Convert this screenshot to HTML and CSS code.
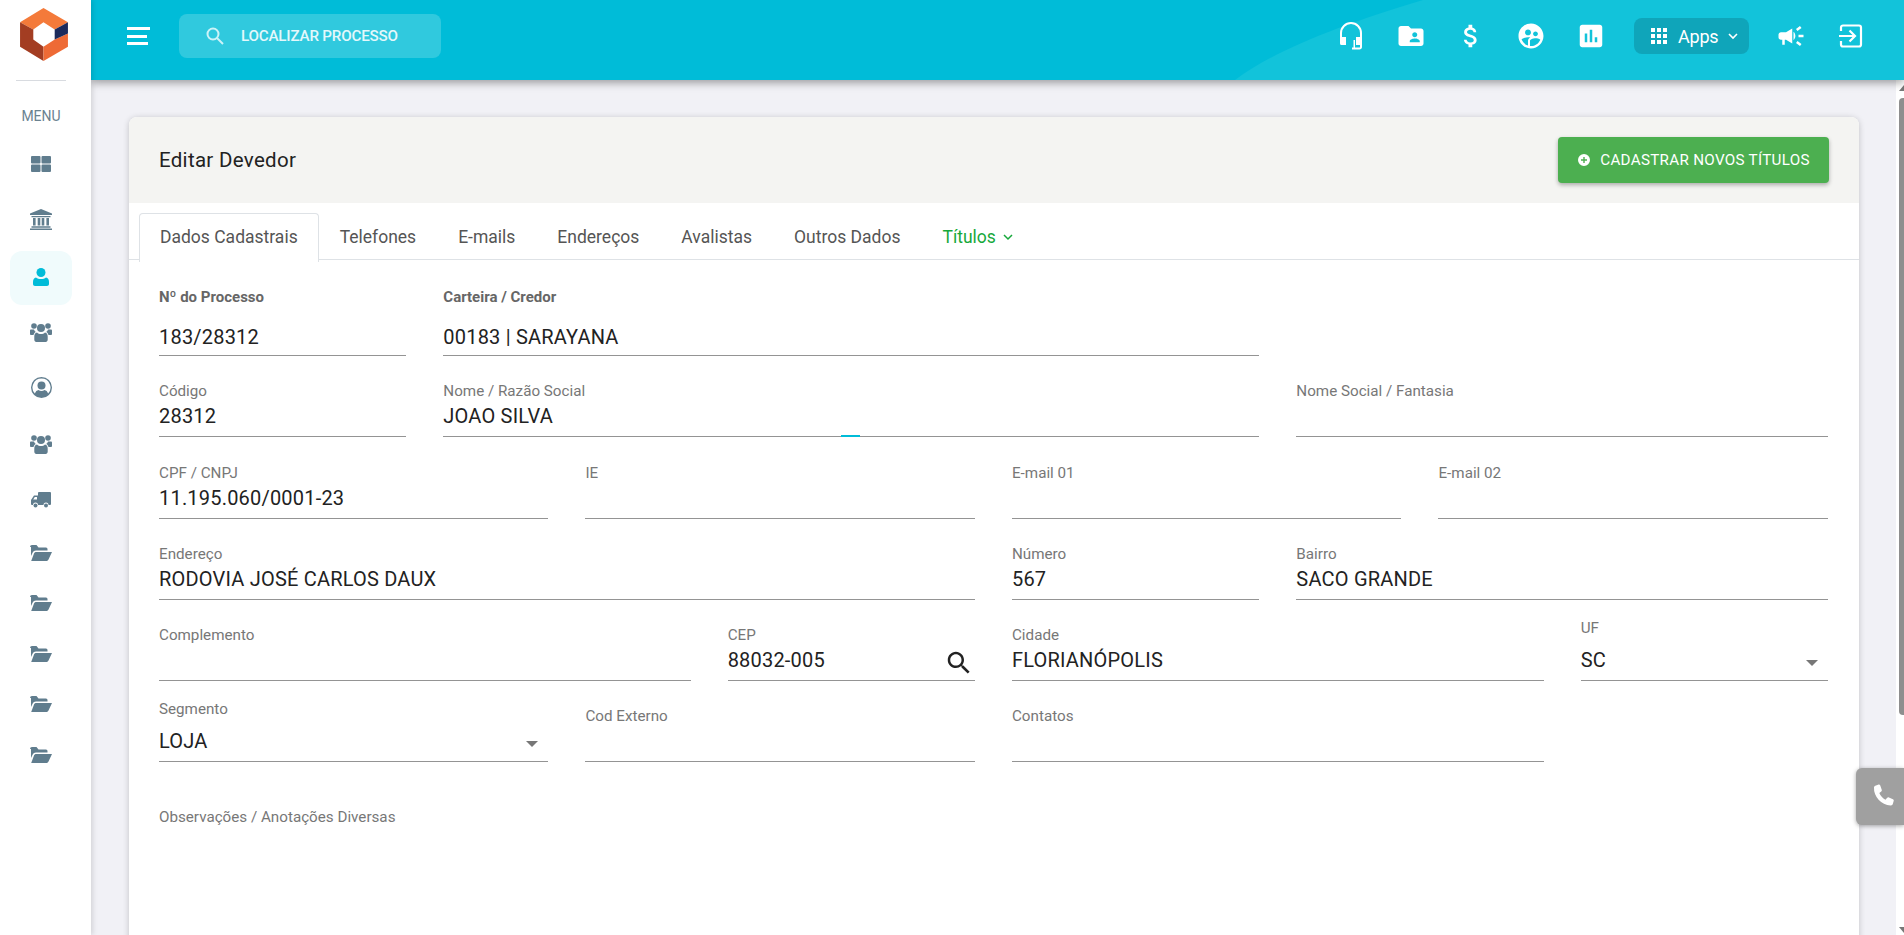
FILE: index.html
```html
<!DOCTYPE html>
<html lang="pt-BR">
<head>
    <meta charset="UTF-8">
    <meta name="viewport" content="width=device-width, initial-scale=1.0">
    <title>Editar Devedor</title>
    <link rel="stylesheet" href="styles.css">
</head>
<body>
    <aside class="sidebar">
        <div class="logo">
            <svg width="48" height="53" viewBox="20 8 47 52">
                <path fill="#f47a3a" d="M20 22 43 8l24 14-13 7-11-7-10 7z"/>
                <path fill="#a33d22" d="M20 22l13 7v10l10 7v14L20 46z"/>
                <path fill="#ee6a35" d="M43 60l24-14V33l-13 6-11 7z"/>
                <path fill="#1b2a5c" d="M54 29l13-7v11l-13 6z"/>
            </svg>
        </div>
        <div class="sidebar-divider"></div>
        <div class="menu-title">MENU</div>
        <nav class="menu">
            <a class="menu-item" href="#"><svg width="20" height="16" viewBox="0 0 20 16"><path d="M1 0h7.500a1 1 0 0 1 1 1v5.500a1 1 0 0 1-1 1H1a1 1 0 0 1-1-1V1a1 1 0 0 1 1-1zm10.500 0H19a1 1 0 0 1 1 1v5.500a1 1 0 0 1-1 1h-7.500a1 1 0 0 1-1-1V1a1 1 0 0 1 1-1zM1 8.500h7.500a1 1 0 0 1 1 1V15a1 1 0 0 1-1 1H1a1 1 0 0 1-1-1V9.500a1 1 0 0 1 1-1zm10.500 0H19a1 1 0 0 1 1 1V15a1 1 0 0 1-1 1h-7.500a1 1 0 0 1-1-1V9.500a1 1 0 0 1 1-1z"/></svg></a>
            <a class="menu-item" href="#"><svg width="22" height="21" viewBox="0 0 22 21"><path d="M11 0l11 4.500V6H0V4.500zM1.500 7h19v1.200h-19zM3 9h2.600v7.500H3zm4.700 0h2.600v7.500H7.700zm4 0h2.600v7.500h-2.600zm4.700 0H19v7.500h-2.600zM1.500 17.300h19v1.500h-19zM0 19.500h22V21H0z"/></svg></a>
            <a class="menu-item active" href="#"><svg width="16" height="18" viewBox="0 0 16 18"><circle cx="8" cy="4.500" r="4.500"/><path d="M3 9.500c1.300 1 3 1.500 5 1.500s3.700-.5 5-1.500c2 .3 3 2 3 4.500v2c0 1.200-.8 2-2 2H2c-1.200 0-2-.8-2-2v-2c0-2.500 1-4.200 3-4.500z"/></svg></a>
            <a class="menu-item" href="#"><svg width="22" height="20" viewBox="0 0 22 20"><use href="#icon-users"/></svg></a>
            <a class="menu-item" href="#"><svg width="21" height="21" viewBox="0 0 21 21"><path fill-rule="evenodd" d="M10.500 0a10.500 10.500 0 1 1 0 21 10.500 10.500 0 0 1 0-21zm0 1.500a9 9 0 0 0-6.600 15.100c.6-2 2-3.200 3.600-3.500 1.800 1.200 4.200 1.200 6 0 1.600.3 3 1.500 3.600 3.500A9 9 0 0 0 10.500 1.500z"/><circle cx="10.500" cy="8.500" r="4"/></svg></a>
            <a class="menu-item" href="#"><svg width="22" height="20" viewBox="0 0 22 20"><use href="#icon-users"/></svg></a>
            <a class="menu-item" href="#"><svg width="20" height="16" viewBox="0 0 20 16"><path fill-rule="evenodd" d="M8 0h11a1 1 0 0 1 1 1v11a1 1 0 0 1-1 1h-1.500a2.500 2.500 0 0 0-5 0H7a2.500 2.500 0 0 0-5 0H1a1 1 0 0 1-1-1V8l3-4.500h4V1a1 1 0 0 1 1-1zM2.200 7.500H6V5H3.800z"/><circle cx="4.500" cy="13.500" r="2"/><circle cx="15" cy="13.500" r="2"/></svg></a>
            <a class="menu-item folder" href="#"><svg width="22" height="16" viewBox="0 0 22 16"><use href="#icon-folder"/></svg></a>
            <a class="menu-item folder" href="#"><svg width="22" height="16" viewBox="0 0 22 16"><use href="#icon-folder"/></svg></a>
            <a class="menu-item folder" href="#"><svg width="22" height="16" viewBox="0 0 22 16"><use href="#icon-folder"/></svg></a>
            <a class="menu-item folder" href="#"><svg width="22" height="16" viewBox="0 0 22 16"><use href="#icon-folder"/></svg></a>
            <a class="menu-item folder" href="#"><svg width="22" height="16" viewBox="0 0 22 16"><use href="#icon-folder"/></svg></a>
        </nav>
    </aside>

    <div class="main">
        <header class="topbar">
            <svg class="topbar-wave" width="669" height="80" viewBox="0 0 669 80"><path d="M0 80C40 50 105 25 188 0H669V80z"/></svg>
            <button class="menu-toggle" type="button"><span></span><span></span><span></span></button>
            <label class="search">
                <svg width="18" height="18" viewBox="0 0 18 18" fill="none" stroke="currentColor" stroke-width="2"><circle cx="7" cy="7" r="5.500"/><path d="M11 11l6 6"/></svg>
                <input type="text" placeholder="LOCALIZAR PROCESSO">
            </label>
            <div class="topbar-actions">
                <a class="top-icon" href="#"><svg width="26" height="28" viewBox="0 0 26 28"><path fill="none" stroke="#fff" stroke-width="2" d="M3 17V11a10 10 0 0 1 20 0v14a1.500 1.500 0 0 1-1.500 1.500H14"/><path fill="#fff" d="M3.500 15H8v8H3.500A1.500 1.500 0 0 1 2 21.500v-5A1.500 1.500 0 0 1 3.500 15zM18 15h4.500a1.500 1.500 0 0 1 1.500 1.500v5a1.500 1.500 0 0 1-1.500 1.500H18zM15.500 18H17v8h-1.500z"/></svg></a>
                <a class="top-icon" href="#"><svg width="30" height="30" viewBox="0 0 24 24"><path d="M20 6h-8l-2-2H4c-1.100 0-1.990.9-1.990 2L2 18c0 1.100.9 2 2 2h16c1.100 0 2-.9 2-2V8c0-1.100-.9-2-2-2zm-5 3c1.100 0 2 .9 2 2s-.9 2-2 2-2-.9-2-2 .9-2 2-2zm4 8h-8v-1c0-1.330 2.670-2 4-2s4 .67 4 2v1z"/></svg></a>
                <a class="top-icon" href="#"><svg width="30" height="30" viewBox="0 0 24 24"><path d="M11.800 10.900c-2.270-.59-3-1.200-3-2.150 0-1.090 1.010-1.850 2.700-1.850 1.780 0 2.440.85 2.500 2.100h2.210c-.07-1.720-1.120-3.300-3.210-3.810V3h-3v2.160c-1.940.42-3.500 1.680-3.500 3.610 0 2.310 1.910 3.460 4.700 4.130 2.500.6 3 1.480 3 2.410 0 .69-.49 1.790-2.700 1.790-2.060 0-2.870-.92-2.980-2.100h-2.200c.12 2.190 1.760 3.420 3.680 3.830V21h3v-2.150c1.950-.37 3.500-1.500 3.500-3.550 0-2.840-2.430-3.810-4.700-4.400z"/></svg></a>
                <a class="top-icon" href="#"><svg width="30" height="30" viewBox="0 0 24 24"><path d="M11.990 2c-5.520 0-10 4.480-10 10s4.480 10 10 10 10-4.480 10-10-4.480-10-10-10zm3.610 6.340c1.070 0 1.930.86 1.930 1.930 0 1.070-.86 1.930-1.930 1.930-1.070 0-1.930-.86-1.930-1.930-.01-1.070.86-1.930 1.930-1.930zm-6-1.580c1.300 0 2.360 1.060 2.360 2.360 0 1.300-1.060 2.360-2.360 2.360s-2.360-1.060-2.360-2.360c0-1.310 1.050-2.360 2.360-2.360zm0 9.130v3.750c-2.400-.75-4.300-2.600-5.140-4.960 1.050-1.120 3.670-1.690 5.140-1.690.53 0 1.200.08 1.900.22-1.640.87-1.900 2.020-1.900 2.680zM11.990 20c-.27 0-.53-.01-.79-.04v-4.070c0-1.420 2.940-2.130 4.400-2.130 1.070 0 2.920.39 3.840 1.150-1.170 2.970-4.060 5.090-7.450 5.090z"/></svg></a>
                <a class="top-icon" href="#"><svg width="30" height="30" viewBox="0 0 24 24"><path d="M19 3H5c-1.100 0-2 .9-2 2v14c0 1.100.9 2 2 2h14c1.100 0 2-.9 2-2V5c0-1.100-.9-2-2-2zM9 17H7v-7h2v7zm4 0h-2V7h2v10zm4 0h-2v-4h2v4z"/></svg></a>
                <button class="apps-btn" type="button">
                    <svg width="24" height="24" viewBox="0 0 24 24"><path d="M4 8h4V4H4v4zm6 12h4v-4h-4v4zm-6 0h4v-4H4v4zm0-6h4v-4H4v4zm6 0h4v-4h-4v4zm6-10v4h4V4h-4zm-6 4h4V4h-4v4zm6 6h4v-4h-4v4zm0 6h4v-4h-4v4z"/></svg>
                    <span>Apps</span>
                    <svg class="chevron" width="12" height="8" viewBox="0 0 12 8" fill="none" stroke="currentColor" stroke-width="1.600"><path d="M2 2l4 4 4-4"/></svg>
                </button>
                <a class="top-icon" href="#"><svg width="30" height="30" viewBox="0 0 24 24"><path d="M18 11v2h4v-2h-4zm-2 6.610c.96.71 2.210 1.650 3.200 2.390.4-.53.8-1.070 1.200-1.600-.99-.74-2.240-1.680-3.200-2.400-.4.54-.8 1.080-1.200 1.610zM20.400 5.600c-.4-.53-.8-1.070-1.200-1.600-.99.74-2.240 1.680-3.200 2.400.4.53.8 1.070 1.200 1.600.96-.72 2.210-1.650 3.200-2.400zM4 9c-1.100 0-2 .9-2 2v2c0 1.100.9 2 2 2h1v4h2v-4h1l5 3V6L8 9H4zm11.500 3c0-1.330-.58-2.530-1.500-3.350v6.690c.92-.81 1.500-2.010 1.500-3.340z"/></svg></a>
                <a class="top-icon" href="#"><svg width="26" height="26" viewBox="0 0 26 26" fill="none" stroke="#fff" stroke-width="2.200"><path d="M3 8V4.500A2 2 0 0 1 5 2.500h16a2 2 0 0 1 2 2v17a2 2 0 0 1-2 2H5a2 2 0 0 1-2-2V18"/><path d="M1 13h15M11.500 7.500L17 13l-5.500 5.500"/></svg></a>
            </div>
        </header>

        <div class="page">
            <main class="content">
                <section class="card">
                    <div class="card-head">
                        <h1>Editar Devedor</h1>
                        <button class="btn-green" type="button">
                            <svg width="14" height="14" viewBox="0 0 14 14"><path fill-rule="evenodd" d="M7 1a6 6 0 1 1 0 12A6 6 0 0 1 7 1zM6.300 4v2.300H4v1.400h2.300V10h1.400V7.700H10V6.300H7.700V4z"/></svg>
                            CADASTRAR NOVOS TÍTULOS
                        </button>
                    </div>

                    <ul class="tabs">
                        <li class="tab active">Dados Cadastrais</li>
                        <li class="tab">Telefones</li>
                        <li class="tab">E-mails</li>
                        <li class="tab">Endereços</li>
                        <li class="tab">Avalistas</li>
                        <li class="tab">Outros Dados</li>
                        <li class="tab tab-green">Títulos
                            <svg width="10" height="7" viewBox="0 0 10 7" fill="none" stroke="currentColor" stroke-width="1.500"><path d="M1 1l4 4 4-4"/></svg>
                        </li>
                    </ul>

                    <form class="form-grid">
                        <div class="field first col-2"><label class="strong">Nº do Processo</label><input type="text" value="183/28312"></div>
                        <div class="field first col-6"><label class="strong">Carteira / Credor</label><input type="text" value="00183 | SARAYANA"></div>
                        <div class="first col-4"></div>

                        <div class="field col-2"><label>Código</label><input type="text" value="28312"></div>
                        <div class="field col-6 focus-line"><label>Nome / Razão Social</label><input type="text" value="JOAO SILVA"></div>
                        <div class="field col-4"><label>Nome Social / Fantasia</label><input type="text"></div>

                        <div class="field col-3"><label>CPF / CNPJ</label><input type="text" value="11.195.060/0001-23"></div>
                        <div class="field col-3"><label>IE</label><input type="text"></div>
                        <div class="field col-3"><label>E-mail 01</label><input type="text"></div>
                        <div class="field col-3"><label>E-mail 02</label><input type="text"></div>

                        <div class="field col-6"><label>Endereço</label><input type="text" value="RODOVIA JOSÉ CARLOS DAUX"></div>
                        <div class="field col-2"><label>Número</label><input type="text" value="567"></div>
                        <div class="field col-4"><label>Bairro</label><input type="text" value="SACO GRANDE"></div>

                        <div class="field col-4"><label>Complemento</label><input type="text"></div>
                        <div class="field col-2 has-icon"><label>CEP</label><input type="text" value="88032-005">
                            <svg class="cep-search" width="30" height="30" viewBox="0 0 24 24"><path d="M15.500 14h-.79l-.28-.27C15.410 12.590 16 11.110 16 9.500 16 5.910 13.090 3 9.500 3S3 5.910 3 9.500 5.910 16 9.500 16c1.610 0 3.090-.59 4.230-1.570l.27.28v.79l5 4.990L20.490 19l-4.990-5zm-6 0C7.010 14 5 11.990 5 9.500S7.010 5 9.500 5 14 7.010 14 9.500 11.990 14 9.500 14z"/></svg>
                        </div>
                        <div class="field col-4"><label>Cidade</label><input type="text" value="FLORIANÓPOLIS"></div>
                        <div class="field col-2 select-field"><label>UF</label><select><option>SC</option></select></div>

                        <div class="field col-3 select-field"><label>Segmento</label><select><option>LOJA</option></select></div>
                        <div class="field col-3"><label>Cod Externo</label><input type="text"></div>
                        <div class="field col-4"><label>Contatos</label><input type="text"></div>
                        <div class="col-2"></div>

                        <div class="field-notes col-12"><label>Observações / Anotações Diversas</label></div>
                    </form>
                </section>
            </main>
            <div class="scrollbar">
                <span class="arrow-up"></span>
                <span class="thumb"></span>
                <span class="arrow-down"></span>
            </div>
        </div>
    </div>

    <button class="phone-tab" type="button">
        <svg width="32" height="32" viewBox="0 0 24 24"><path d="M7 3.500l2.500-.8c.5-.1 1 .1 1.200.6l1.100 3.200c.2.500 0 1-.4 1.300L10 9c.8 2 2.500 3.900 4.600 5l1.300-1.400c.3-.4.900-.5 1.300-.3l3 1.300c.5.200.7.700.6 1.200l-.7 2.500c-.2.700-.8 1.200-1.600 1.100C11.500 18 5.600 11.800 6 4.900c0-.6.400-1.200 1-1.400z"/></svg>
    </button>

    <svg class="icon-defs" width="0" height="0">
        <defs>
            <g id="icon-users">
                <circle cx="4" cy="4" r="2.800"/><circle cx="18" cy="4" r="2.800"/><circle cx="11" cy="6" r="4"/>
                <path d="M0 8.500c0-.5.500-1 1-1h3c.3 1 1 2 1.800 2.600C4.500 10.800 3.800 12 3.500 13H1c-.5 0-1-.5-1-1zM22 8.500c0-.5-.500-1-1-1h-3c-.3 1-1 2-1.800 2.600 1.300.7 2 1.900 2.300 2.900H21c.5 0 1-.5 1-1z"/>
                <path d="M7 10.500c1 1 2.500 1.500 4 1.500s3-.5 4-1.500c1.800.3 2.700 2 2.700 4v3.300c0 1.200-.8 2.200-2 2.200H6.300c-1.200 0-2-1-2-2.200v-3.300c0-2 .9-3.700 2.700-4z"/>
            </g>
            <g id="icon-folder">
                <path d="M0 2a2 2 0 0 1 2-2h4.500l2 2.500H16a1.500 1.500 0 0 1 1.500 1.500v1.500H6c-1.500 0-2.700.8-3.300 2L1 11V2z"/>
                <path d="M6.200 7H22l-3.500 7.500c-.4.900-1.100 1.500-2.200 1.500H1.200L4 8.500C4.400 7.500 5.200 7 6.200 7z"/>
            </g>
        </defs>
    </svg>
</body>
</html>
```

FILE: styles.css
```css
* {
    box-sizing: border-box;
}
html, body {
    height: 100%;
}
body {
    margin: 0;
    display: flex;
    overflow: hidden;
    font-family: Roboto, "Liberation Sans", sans-serif;
    background-color: #f1f1f6;
    color: #222;
}
button {
    font-family: inherit;
    border: none;
    cursor: pointer;
}

/* menu lateral */
.sidebar {
    width: 91px;
    flex-shrink: 0;
    padding-right: 9px;
    background-color: white;
    box-shadow: 2px 0 5px rgba(0, 0, 0, 0.12);
    z-index: 2;
}
.logo {
    height: 80px;
    padding: 8px 0 0 20px;
}
.sidebar-divider {
    width: 50px;
    margin-left: 16px;
    border-top: 1px solid #d8dbe0;
}
.menu-title {
    margin-top: 27px;
    height: 27.500px;
    text-align: center;
    font-size: 14px;
    line-height: 16px;
    color: #6b8290;
}
.menu {
    display: flex;
    flex-direction: column;
    align-items: center;
}
.menu-item {
    width: 62px;
    height: 56px;
    flex-shrink: 0;
    display: flex;
    justify-content: center;
    align-items: center;
    border-radius: 12px;
    fill: #607d8e;
}
.menu-item.folder {
    height: 50.500px;
}
.menu-item.active {
    height: 54px;
    margin: 3px 0 -1px;
    padding-bottom: 2px;
    background-color: #f0fbfc;
    fill: #00bcd8;
}

.main {
    flex: 1;
    min-width: 0;
    display: flex;
    flex-direction: column;
}

/* barra superior */
.topbar {
    position: relative;
    height: 80px;
    flex-shrink: 0;
    display: flex;
    align-items: center;
    padding: 0 23px 8px 36px;
    background-color: #00bcd8;
    box-shadow: 0 3px 8px rgba(0, 0, 0, 0.35);
    z-index: 1;
}
.topbar-wave {
    position: absolute;
    right: 0;
    top: 0;
    fill: #12c3da;
}
.menu-toggle {
    position: relative;
    width: 23px;
    height: 18px;
    padding: 0;
    background: none;
    display: flex;
    flex-direction: column;
    justify-content: space-between;
}
.menu-toggle span {
    display: block;
    height: 3px;
    width: 23px;
    background-color: white;
}
.menu-toggle span:nth-child(2) {
    width: 20px;
}
.menu-toggle span:nth-child(3) {
    width: 21px;
}
.search {
    position: relative;
    width: 262px;
    height: 44px;
    margin-left: 29px;
    display: flex;
    align-items: center;
    padding-left: 27px;
    background-color: #30c9de;
    border-radius: 8px;
    color: #cdf3f8;
}
.search input {
    width: 200px;
    margin-left: 17px;
    padding: 0;
    background: none;
    border: none;
    outline: none;
    font-family: inherit;
    font-size: 15.200px;
    font-weight: 500;
    letter-spacing: -0.2px;
}
.search input::placeholder {
    color: #e4f8fb;
    opacity: 1;
}
.topbar-actions {
    position: relative;
    margin-left: auto;
    display: flex;
    align-items: center;
}
.top-icon {
    width: 60px;
    height: 36px;
    display: flex;
    justify-content: center;
    align-items: center;
    fill: white;
}
.apps-btn {
    width: 115px;
    height: 36px;
    margin: 0 12px 0 13px;
    padding: 0 0 0 13px;
    display: flex;
    align-items: center;
    background-color: #0fa5ba;
    border-radius: 8px;
    color: white;
    fill: white;
    font-size: 18px;
}
.apps-btn span {
    margin-left: 7px;
    letter-spacing: -0.2px;
}
.apps-btn .chevron {
    margin-left: 9px;
}

/* conteudo */
.page {
    flex: 1;
    min-height: 0;
    display: flex;
}
.content {
    flex: 1;
    min-width: 0;
    padding: 37px 37px 0 38px;
    overflow: hidden;
}
.card {
    background-color: white;
    border-radius: 8px;
    box-shadow: 0 1px 6px rgba(0, 0, 0, 0.2);
    padding-bottom: 120px;
}
.card-head {
    height: 86px;
    display: flex;
    justify-content: space-between;
    align-items: center;
    padding: 0 30px;
    background-color: #f4f4f2;
    border-radius: 8px 8px 0 0;
}
.card-head h1 {
    margin: 0;
    font-size: 20.500px;
    font-weight: 400;
    letter-spacing: 0.3px;
    color: #222;
}
.btn-green {
    width: 271px;
    height: 46px;
    display: flex;
    justify-content: center;
    align-items: center;
    gap: 9px;
    background-color: #4caf50;
    border-radius: 4px;
    box-shadow: 0 2px 4px rgba(0, 0, 0, 0.3);
    color: white;
    fill: white;
    font-size: 15.200px;
    font-weight: 400;
    letter-spacing: 0.3px;
}

/* abas */
.tabs {
    height: 57px;
    margin: 0;
    padding: 10px 0 0 10px;
    display: flex;
    list-style: none;
    border-bottom: 1px solid #dee2e6;
}
.tab {
    height: 49px;
    padding: 0 20px 2px;
    display: flex;
    align-items: center;
    gap: 7px;
    border: 1px solid transparent;
    border-bottom: none;
    border-radius: 4px 4px 0 0;
    font-size: 17.500px;
    color: #555;
}
.tab.active {
    position: relative;
    background-color: white;
    border-color: #dee2e6;
}
.tab-green {
    color: #16a83a;
}

/* formulario */
.form-grid {
    display: grid;
    grid-template-columns: repeat(12, 1fr);
    column-gap: 37px;
    padding: 0 31px 0 30px;
}
.col-2 { grid-column: span 2; }
.col-3 { grid-column: span 3; }
.col-4 { grid-column: span 4; }
.col-6 { grid-column: span 6; }
.col-12 { grid-column: span 12; }
.field {
    position: relative;
    height: 81.300px;
    display: flex;
    flex-direction: column;
    justify-content: flex-end;
}
.field.first {
    height: 96px;
}
.field label, .field-notes label {
    margin-bottom: 2px;
    font-size: 15.200px;
    line-height: 16px;
    color: #777;
}
.field label.strong {
    font-weight: 700;
    margin-bottom: 18px;
    font-size: 15px;
    color: #666;
}
.field input, .field select {
    width: 100%;
    height: 36px;
    padding: 0 0 5px;
    background: none;
    border: none;
    border-bottom: 1px solid #949494;
    border-radius: 0;
    outline: none;
    appearance: none;
    font-family: inherit;
    font-size: 20px;
    letter-spacing: 0.2px;
    color: #222;
}
.field.first input {
    height: 33px;
    padding-bottom: 4px;
}
.field select {
    height: 36px;
    padding-bottom: 6px;
}
.select-field label {
    margin-bottom: 9px;
}
.select-field::after {
    content: "";
    position: absolute;
    right: 10px;
    bottom: 15px;
    border-left: 6px solid transparent;
    border-right: 6px solid transparent;
    border-top: 6px solid #777;
}
.focus-line::after {
    content: "";
    position: absolute;
    left: 398px;
    bottom: 0;
    width: 19px;
    height: 2px;
    background-color: #00bcd8;
}
.cep-search {
    position: absolute;
    right: 1px;
    bottom: 3px;
    fill: #222;
}
.field-notes {
    height: 120px;
    padding-top: 45px;
}

/* barra de rolagem */
.scrollbar {
    position: relative;
    width: 8px;
    flex-shrink: 0;
    background-color: white;
}
.thumb {
    position: absolute;
    left: 3px;
    right: 0;
    top: 18px;
    height: 617px;
    background-color: #8e8e8e;
    border-radius: 4px 0 0 4px;
}
.arrow-up, .arrow-down {
    position: absolute;
    right: 0;
    border-left: 5px solid transparent;
    border-right: 0;
}
.arrow-up {
    top: 5px;
    border-bottom: 6px solid #777;
}
.arrow-down {
    bottom: 2px;
    border-top: 6px solid #777;
}

.phone-tab {
    position: fixed;
    right: 0;
    top: 768px;
    width: 48px;
    height: 57px;
    padding: 0 0 0 10px;
    display: flex;
    align-items: center;
    background-color: #a0a0a0;
    border-radius: 6px 0 0 6px;
    box-shadow: 0 1px 4px rgba(0, 0, 0, 0.35);
    fill: white;
    z-index: 3;
}
.icon-defs {
    position: absolute;
}
```
